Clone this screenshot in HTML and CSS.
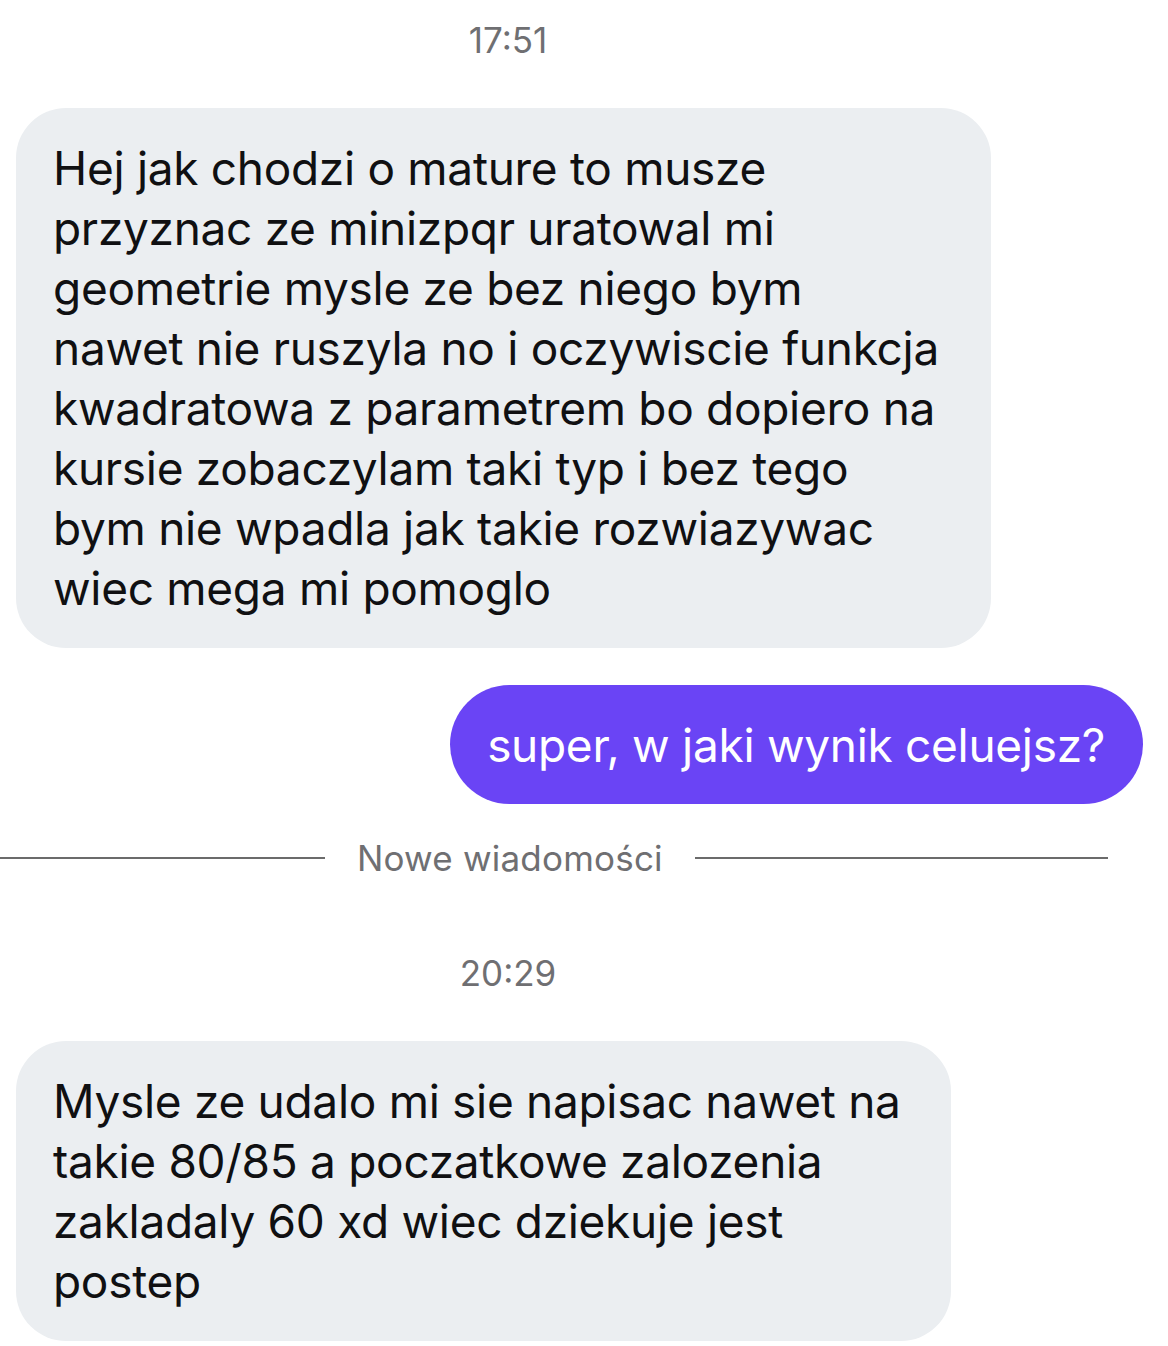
FILE: index.html
```html
<!DOCTYPE html>
<html lang="pl">
<head>
<meta charset="utf-8">
<title>Czat</title>
<link rel="stylesheet" href="styles.css">
</head>
<body>
<main class="chat">
  <div class="stamp stamp-first">17:51</div>
  <div class="bubble incoming bubble-first">Hej jak chodzi o mature to musze<br>przyznac ze minizpqr uratowal mi<br>geometrie mysle ze bez niego bym<br>nawet nie ruszyla no i oczywiscie funkcja<br>kwadratowa z parametrem bo dopiero na<br>kursie zobaczylam taki typ i bez tego<br>bym nie wpadla jak takie rozwiazywac<br>wiec mega mi pomoglo</div>
  <div class="bubble outgoing">super, w jaki wynik celuejsz?</div>
  <div class="divider">
    <span class="rule"></span>
    <span class="divider-label">Nowe wiadomości</span>
    <span class="rule"></span>
  </div>
  <div class="stamp stamp-second">20:29</div>
  <div class="bubble incoming bubble-second">Mysle ze udalo mi sie napisac nawet na<br>takie 80/85 a poczatkowe zalozenia<br>zakladaly 60 xd wiec dziekuje jest<br>postep</div>
</main>
</body>
</html>
```

FILE: styles.css
```css
html, body {
  margin: 0;
  padding: 0;
  background: #ffffff;
}

body {
  width: 1168px;
  font-family: Inter, "Noto Sans", "Liberation Sans", sans-serif;
  -webkit-font-smoothing: antialiased;
}

.chat {
  display: flex;
  flex-direction: column;
  align-items: flex-start;
}

.stamp {
  width: 1016px;
  text-align: center;
  font-size: 35px;
  line-height: 44px;
  color: #6f6f72;
}

.stamp-first {
  margin-top: 18px;
}

.stamp-second {
  margin-top: 71px;
}

.bubble {
  font-size: 46px;
  line-height: 60px;
  letter-spacing: -0.3px;
  box-sizing: border-box;
  white-space: nowrap;
}

.incoming {
  margin-left: 16px;
  background: #ebeef1;
  color: #101012;
  border-radius: 50px;
  padding: 30px 52px 30px 37px;
}

.bubble-first {
  margin-top: 46px;
}

.bubble-second {
  margin-top: 46px;
  padding-right: 50px;
}

.outgoing {
  align-self: flex-end;
  margin-right: 25px;
  margin-top: 37px;
  background: #6a44f5;
  color: #ffffff;
  border-radius: 60px;
  padding: 30px 38px 29px 37px;
}

.divider {
  margin-top: 32px;
  width: 1108px;
  display: grid;
  grid-template-columns: 325px auto 1fr;
  align-items: center;
  column-gap: 32px;
  height: 44px;
}

.rule {
  height: 2px;
  background: #6b6b6b;
}

.divider-label {
  font-size: 35px;
  line-height: 44px;
  letter-spacing: 0.2px;
  color: #6f6f72;
  white-space: nowrap;
}
```
